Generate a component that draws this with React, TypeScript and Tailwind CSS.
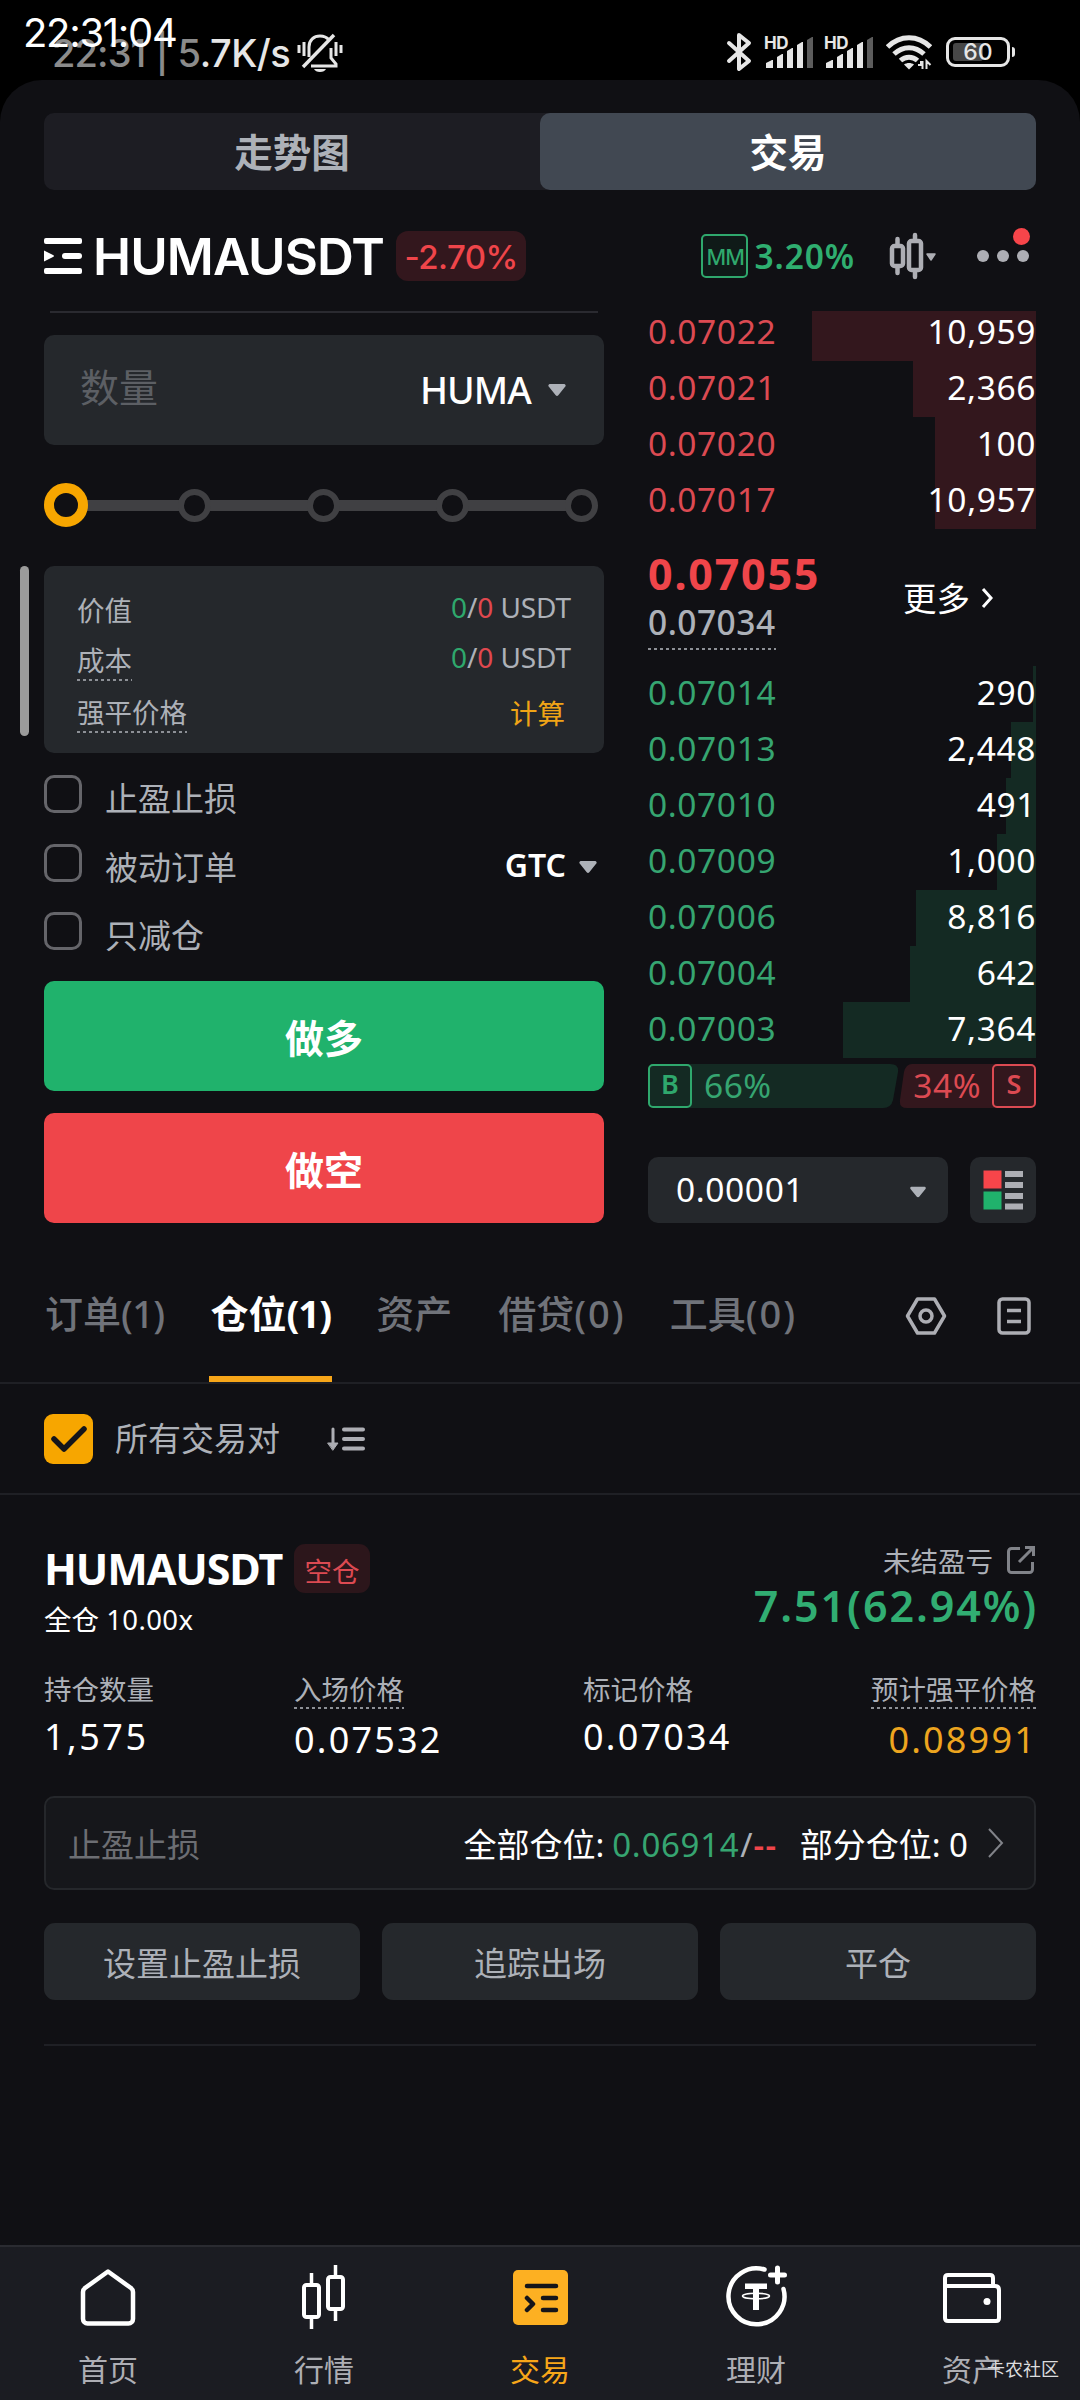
import type { ReactNode } from "react";

const asks = [
  { price: "0.07022", size: "10,959", depth: 224 },
  { price: "0.07021", size: "2,366", depth: 123 },
  { price: "0.07020", size: "100", depth: 101 },
  { price: "0.07017", size: "10,957", depth: 101 },
];

const bids = [
  { price: "0.07014", size: "290", depth: 3 },
  { price: "0.07013", size: "2,448", depth: 25 },
  { price: "0.07010", size: "491", depth: 30 },
  { price: "0.07009", size: "1,000", depth: 39 },
  { price: "0.07006", size: "8,816", depth: 120 },
  { price: "0.07004", size: "642", depth: 126 },
  { price: "0.07003", size: "7,364", depth: 193 },
];

function Caret({ className = "" }: { className?: string }) {
  return (
    <svg viewBox="0 0 18 12" className={`h-3 w-[18px] fill-[#adb1b8] ${className}`}>
      <path d="M2 0h14a1.6 1.6 0 0 1 1.3 2.6l-7 8.6a1.7 1.7 0 0 1-2.6 0l-7-8.6A1.6 1.6 0 0 1 2 0Z" />
    </svg>
  );
}

function Dashed({ children }: { children: ReactNode }) {
  return (
    <span className="flex flex-col">
      {children}
      <span className="h-[2px] bg-[repeating-linear-gradient(90deg,#8d9096_0_3px,transparent_3px_6px)]" />
    </span>
  );
}

function Signal() {
  return (
    <div className="relative h-8 w-[49px]">
      <span className="absolute -top-[3px] left-0 font-['Inter'] text-[17px] leading-[18px] font-bold tracking-[-0.500px]">HD</span>
      <svg viewBox="0 0 49 32" className="h-8 w-[49px] fill-[#e6e6e6]">
        <path d="M2 31v-5l6-3h1v8Z" />
        <path d="M13 31V20l5-3h1v14Z" />
        <path d="M23 31V14l5-3h1v20Z" />
        <path d="M33 31V8l5-3h1v26Z" />
        <path d="M43 31V3l5-3h1v31Z" fill="#5c5c5c" />
      </svg>
    </div>
  );
}

function StatusBar() {
  return (
    <div className="relative flex h-20 items-start justify-between pr-[65px] pl-[52px] text-[#e6e6e6]">
      <div className="flex items-center pt-[30px] font-['Inter'] text-[38px] leading-[46px] font-medium">
        <span className="tracking-[-0.9px] text-[#8b8b8b]">22:31</span>
        <span className="ml-[10px] text-[#8b8b8b]">|</span>
        <span className="ml-[9px] tracking-[-0.5px]">
          <span className="text-[#8b8b8b]">5</span>.7K/s
        </span>
        <svg viewBox="0 0 46 40" className="ml-[7px] h-10 w-[46px]" fill="none" stroke="#e6e6e6" strokeWidth="3">
          <path d="M2 12v8M7 9v14M39 9v14M44 12v8" />
          <path d="M12 24V14C12 7 17 3 23 3c4 0 7 1.500 9 4M34 15v10l5 6v2H14" />
          <path d="M6 34 37 2" strokeWidth="3.500" />
          <path d="M17 36h12c-1 2-3 3-6 3s-5-1-6-3Z" fill="#e6e6e6" stroke="none" />
        </svg>
      </div>
      <span className="absolute top-[9px] left-[23px] font-['Inter'] text-[40px] leading-[48px] tracking-[-1.300px] text-white">
        22:31:04
      </span>
      <div className="flex items-start pt-[32px]">
        <svg viewBox="0 0 26 40" className="h-10 w-[26px]" fill="none" stroke="#e6e6e6" strokeWidth="4" strokeLinejoin="round" strokeLinecap="round">
          <path d="M3 11 23 29 13 37V3l10 8L3 29" />
        </svg>
        <div className="ml-[12px] pt-[5px]"><Signal /></div>
        <div className="ml-[11px] pt-[5px]"><Signal /></div>
        <svg viewBox="0 0 46 36" className="ml-[13px] mt-[3px] h-9 w-[46px]" fill="none" stroke="#e6e6e6" strokeWidth="5">
          <path d="M1.500 12C14-.5 32-.5 44.500 12" />
          <path d="M8 19c9-8.500 21-8.500 30 0" />
          <path d="M14.500 25.500c5-4.500 12-4.500 17 0" />
          <path d="M18 29.500c3-2 7-2 10 0l-5 5Z" fill="#e6e6e6" stroke="none" />
          <path d="M32 30h3v-4M36.500 26v8M40.500 34v-8l4 4" strokeWidth="2" />
        </svg>
        <div className="ml-[14px] mt-[5px] flex items-center">
          <div className="relative flex h-[30px] w-[64px] items-center justify-center rounded-[9px] border-[3px] border-[#e6e6e6]">
            <span className="absolute top-[3px] left-1 h-[18px] w-[30px] rounded-[3px] bg-[#474747]" />
            <span className="relative font-['Inter'] text-[23px] leading-6 font-medium">60</span>
          </div>
          <span className="ml-[2px] h-[10px] w-[3px] rounded-r bg-[#e6e6e6]" />
        </div>
      </div>
    </div>
  );
}

function Header() {
  return (
    <div className="mt-[22px] flex h-[88px] items-center justify-between px-11">
      <div className="flex items-center">
        <svg viewBox="0 0 38 36" className="h-9 w-[38px] fill-white">
          <rect width="38" height="6" rx="2" />
          <rect x="18" y="15" width="20" height="6" rx="3" />
          <rect y="30" width="38" height="6" rx="2" />
          <path d="M0 12.500 9 17q2 1 0 2l-9 4.500Z" />
        </svg>
        <span className="ml-[11px] pt-[2px] font-['Inter'] text-[51px] leading-[60px] font-semibold tracking-[-0.900px] text-white">HUMAUSDT</span>
        <span className="ml-3 flex h-[50px] w-[130px] items-center justify-center rounded-xl bg-[#33171d] pt-[4px] font-['Inter'] text-[33px] font-medium tracking-[-0.500px] text-[#ef454a]">
          -2.70%
        </span>
      </div>
      <div className="flex items-center">
        <span className="flex h-11 w-[47px] items-center justify-center rounded-[5px] border-[2.500px] border-[#2fa86d] bg-[#0f1a18] text-[22px] font-medium tracking-[-1.500px] text-[#2fa86d]">
          MM
        </span>
        <span className="ml-[6px] text-[33.500px] font-semibold tracking-[0.9px] text-[#2fae70]">3.20%</span>
        <svg viewBox="0 0 48 48" className="ml-[34px] h-12 w-12" fill="none" stroke="#adaeb4" strokeWidth="4.500" strokeLinecap="round">
          <rect x="3" y="14" width="11" height="20" rx="2.500" />
          <path d="M8.500 13V7M8.500 35v6" />
          <rect x="20" y="9" width="12" height="29" rx="2.500" />
          <path d="M26 8V3M26 39v6" />
          <path d="M38 22h8l-4 6Z" fill="#adaeb4" strokeWidth="1.500" strokeLinejoin="round" />
        </svg>
        <div className="relative ml-[40px] mr-[7px] flex gap-2">
          <span className="size-3 rounded-full bg-[#adaeb4]" />
          <span className="size-3 rounded-full bg-[#adaeb4]" />
          <span className="size-3 rounded-full bg-[#adaeb4]" />
          <span className="absolute -top-[22px] left-[36px] size-[17px] rounded-full bg-[#f7454a]" />
        </div>
      </div>
    </div>
  );
}

function Slider() {
  return (
    <div className="relative mt-[38px] mr-[6px] flex h-11 items-center justify-between">
      <span className="absolute inset-x-4 top-[17px] h-[11px] bg-[#404043]" />
      <span className="relative size-11 rounded-full border-[10px] border-[#f7a600] bg-[#101014]" />
      <span className="relative -ml-[6px] size-[33px] rounded-full border-[6px] border-[#404043] bg-[#101014]" />
      <span className="relative size-[33px] rounded-full border-[6px] border-[#404043] bg-[#101014]" />
      <span className="relative size-[33px] rounded-full border-[6px] border-[#404043] bg-[#101014]" />
      <span className="relative size-[33px] rounded-full border-[6px] border-[#404043] bg-[#101014]" />
    </div>
  );
}

function CheckRow({ label, children }: { label: string; children?: ReactNode }) {
  return (
    <div className="flex h-[68.5px] items-center">
      <span className="h-[38px] w-[38px] rounded-[10px] border-[3px] border-[#65656a]" />
      <span className="ml-[23px] pt-[10px] text-[33px] leading-[40px] text-[#adb1b8]">{label}</span>
      {children}
    </div>
  );
}

function Usdt() {
  return (
    <span className="text-[28px] leading-[34px] tracking-[-0.1px]">
      <span className="text-[#2fa86d]">0</span>/<span className="text-[#e0484f]">0</span> USDT
    </span>
  );
}

function OrderForm() {
  return (
    <div className="relative flex w-[560px] flex-col">
      <span className="absolute -left-6 top-[255px] h-[170px] w-[9px] rounded-full bg-[#9b9b9b]" />
      <div className="mx-[6px] h-[2px] bg-[#2a2a30]" />
      <div className="mt-[22px] flex h-[110px] items-center rounded-[10px] bg-[#25282c] pr-[38px] pl-[36px]">
        <span className="pb-[7px] text-[39px] leading-[46px] text-[#5c5f64]">数量</span>
        <span className="ml-auto text-[37.500px] leading-[46px] font-medium tracking-[-0.9px] text-white">HUMA</span>
        <Caret className="ml-[17px]" />
      </div>
      <Slider />
      <div className="mt-[39px] flex h-[187px] flex-col rounded-[10px] bg-[#25282c] pt-6 pr-[33px] pl-[33px] text-[27.500px] text-[#adb1b8]">
        <div className="flex h-[50px] items-start justify-between">
          <span className="pt-[3px] leading-9">价值</span>
          <Usdt />
        </div>
        <div className="flex h-[50px] items-start justify-between">
          <span className="pt-[3px]"><Dashed><span className="leading-9">成本</span></Dashed></span>
          <Usdt />
        </div>
        <div className="flex items-start justify-between pr-[6px]">
          <span className="pt-[5px]"><Dashed><span className="leading-9">强平价格</span></Dashed></span>
          <span className="pt-[6px] leading-9 text-[#f0a416]">计算</span>
        </div>
      </div>
      <div className="mt-[7px]">
        <CheckRow label="止盈止损" />
        <CheckRow label="被动订单">
          <span className="ml-auto pt-[5px] text-[32px] font-semibold text-white">GTC</span>
          <Caret className="mt-[9px] mr-[7px] ml-[13px]" />
        </CheckRow>
        <CheckRow label="只减仓" />
      </div>
      <button className="mt-[15.5px] h-[110px] rounded-[10px] bg-[#20b26c] pt-1 text-[39px] font-bold text-white">做多</button>
      <button className="mt-[22px] h-[110px] rounded-[10px] bg-[#ef454a] pt-1 text-[39px] font-bold text-white">做空</button>
    </div>
  );
}

function BookRow({ price, size, depth, ask }: { price: string; size: string; depth: number; ask?: boolean }) {
  return (
    <div className="relative flex h-14 shrink-0 items-center justify-between pb-[3px] text-[33.500px] tracking-[0.6px]">
      <span className={`absolute inset-y-0 right-0 ${ask ? "bg-[#33171d]" : "bg-[#142a23]"}`} style={{ width: depth }} />
      <span className={`relative ${ask ? "text-[#dc4a52]" : "text-[#36a571]"}`}>{price}</span>
      <span className="relative text-white">{size}</span>
    </div>
  );
}

function OrderBook() {
  return (
    <div className="flex w-[388px] flex-col">
      <div className="flex h-[218px] flex-col justify-end overflow-hidden">
        {asks.map((row) => <BookRow key={row.price} ask {...row} />)}
      </div>
      <div className="flex h-[137px] justify-between pt-[19px]">
        <div className="flex flex-col items-start">
          <span className="text-[43px] leading-[52px] font-bold tracking-[1.800px] text-[#ef454a]">0.07055</span>
          <Dashed>
            <span className="pb-[4px] text-[33.500px] leading-[44px] font-medium tracking-[0.5px] text-[#adb1b8]">0.07034</span>
          </Dashed>
        </div>
        <div className="flex h-[100px] items-center pr-[43px] text-[33.500px] text-white">
          更多
          <svg viewBox="0 0 12 20" className="ml-[11px] h-5 w-3" fill="none" stroke="white" strokeWidth="3">
            <path d="m2 1 8 9-8 9" />
          </svg>
        </div>
      </div>
      {bids.map((row) => <BookRow key={row.price} {...row} />)}
      <div className="relative mt-[6px] flex h-11 items-center">
        <svg viewBox="0 0 388 44" className="absolute inset-0 h-11 w-[388px]">
          <path d="M0 6a6 6 0 0 1 6-6H242q9 0 8 8l-5 28q-2 8-10 8H6a6 6 0 0 1-6-6Z" fill="#142a23" />
          <path d="M264 0H382a6 6 0 0 1 6 6V38a6 6 0 0 1-6 6H259q-8 0-7-8l4-28q2-8 8-8Z" fill="#33171d" />
        </svg>
        <span className="relative flex size-11 items-center justify-center rounded-[5px] border-[2.500px] border-[#2fa86d] pb-1 text-[27px] font-semibold text-[#2fa86d]">B</span>
        <span className="relative ml-3 pb-[2px] text-[33.500px] tracking-[0.5px] text-[#36a571]">66%</span>
        <span className="relative ml-auto pb-[2px] text-[33.500px] tracking-[0.5px] text-[#dc4a52]">34%</span>
        <span className="relative ml-[11px] flex size-11 items-center justify-center rounded-[5px] border-[2.500px] border-[#dc4a52] pb-1 text-[27px] font-semibold text-[#dc4a52]">S</span>
      </div>
      <div className="mt-[49px] flex justify-between">
        <div className="flex h-[66px] w-[300px] items-center justify-between rounded-[10px] bg-[#25282c] pr-[21px] pb-[2px] pl-[28px] text-[33.500px] tracking-[0.6px] text-white">
          0.00001
          <Caret className="mt-[6px] scale-90" />
        </div>
        <div className="flex size-[66px] items-center justify-center rounded-[10px] bg-[#25282c]">
          <svg viewBox="0 0 40 40" className="size-10">
            <rect x="0.500" y="0.500" width="18" height="18" fill="#f7454a" />
            <rect x="0.500" y="21.500" width="18" height="18" fill="#20b26c" />
            <path d="M22 1h18v6H22ZM22 12h18v6H22ZM22 23h18v6H22ZM22 33.500h18v6H22Z" fill="#adaeb4" />
          </svg>
        </div>
      </div>
    </div>
  );
}

function PanelTabs() {
  return (
    <div className="mt-[40px] flex h-[121px] items-center border-b-2 border-[#1f2025] pl-[45px] text-[38px] font-medium text-[#70737a]">
      <span className="pb-[19px]">订单<span className="tracking-[-0.700px]">(1)</span></span>
      <span className="relative ml-[46px] flex h-[119px] items-center pb-[19px] font-bold text-white">
        仓位<span className="tracking-[-0.900px]">(1)</span>
        <span className="absolute inset-x-[-1px] bottom-0 h-[6px] bg-[#f7a619]" />
      </span>
      <span className="ml-[45px] pb-[19px]">资产</span>
      <span className="ml-[46px] pb-[19px]">借贷<span className="tracking-[2px]">(0)</span></span>
      <span className="ml-[44px] pb-[19px]">工具<span className="tracking-[2px]">(0)</span></span>
      <svg viewBox="0 0 42 38" className="mb-[13px] ml-auto h-[38px] w-[42px]" fill="none" stroke="#adaeb4" strokeWidth="3.500" strokeLinejoin="round">
        <path d="M12.500 2h17L39.500 19l-10 17h-17L2.500 19Z" />
        <circle cx="21" cy="19" r="6" />
      </svg>
      <svg viewBox="0 0 34 38" className="mr-[49px] mb-[13px] ml-[50px] h-[38px] w-[34px]" fill="none" stroke="#adaeb4" strokeWidth="3.500">
        <rect x="2" y="2" width="30" height="34" rx="3.500" />
        <path d="M10 13.500h14M10 24.500h14" />
      </svg>
    </div>
  );
}

function FilterRow() {
  return (
    <div className="flex h-[111px] items-center border-b-2 border-[#1f2025] pl-11">
      <span className="flex h-[50px] w-[49px] items-center justify-center rounded-[9px] bg-[#f7a600]">
        <svg viewBox="0 0 36 26" className="h-[26px] w-9" fill="none" stroke="#15151a" strokeWidth="5.500" strokeLinecap="round" strokeLinejoin="round">
          <path d="m3 13 10 10L33 3" />
        </svg>
      </span>
      <span className="ml-[22px] text-[33px] text-[#adb1b8]">所有交易对</span>
      <svg viewBox="0 0 38 24" className="ml-[47px] h-6 w-[38px]" fill="none" stroke="#adaeb4" strokeWidth="4" strokeLinecap="round">
        <path d="M6 2v15" strokeWidth="3" />
        <path d="M1 16h10l-5 7Z" fill="#adaeb4" strokeWidth="1" strokeLinejoin="round" />
        <path d="M17 2.500h19M17 12h19M17 21.500h19" />
      </svg>
    </div>
  );
}

function Position() {
  return (
    <div className="mt-[49px] px-11">
      <div className="flex justify-between">
        <div>
          <div className="flex h-[49px] items-center">
            <span className="text-[43px] leading-[49px] font-bold tracking-[-1.100px] text-white">HUMAUSDT</span>
            <span className="ml-3 flex h-[49px] w-[76px] items-center justify-center rounded-[11px] bg-[#2c161b] pt-[7px] text-[27.500px] text-[#dc4a52]">空仓</span>
          </div>
          <div className="mt-[9px] text-[27.500px] leading-9 text-white">全仓 <span className="tracking-[0.400px]">10.00x</span></div>
        </div>
        <div className="flex flex-col items-end">
          <div className="flex h-9 items-center text-[27.500px] text-[#adb1b8]">
            未结盈亏
            <svg viewBox="0 0 30 30" className="mb-[5px] ml-[13px] size-[30px]" fill="none" stroke="#818389" strokeWidth="3">
              <path d="M14 3.500H5.500a3 3 0 0 0-3 3v18a3 3 0 0 0 3 3h18a3 3 0 0 0 3-3V17" />
              <path d="M19 2.500h8.500V11M27 3 13 17" />
            </svg>
          </div>
          <div className="-mr-[2px] text-[43px] leading-[52px] font-semibold tracking-[1.900px] text-[#31ad72]">7.51(62.94%)</div>
        </div>
      </div>
      <div className="mt-[34px] flex h-[90px] text-[27.500px] leading-[35px] text-[#adb1b8]">
        <div className="w-[250px]">
          持仓数量
          <div className="pt-[5px] text-[36px] leading-[50px] tracking-[2.500px] text-white">1,575</div>
        </div>
        <div className="flex w-[289px] flex-col items-start">
          <Dashed>入场价格</Dashed>
          <div className="pt-[6px] text-[36px] leading-[50px] tracking-[2.200px] text-white">0.07532</div>
        </div>
        <div>
          标记价格
          <div className="pt-[5px] text-[36px] leading-[50px] tracking-[2.200px] text-white">0.07034</div>
        </div>
        <div className="ml-auto flex flex-col items-end">
          <Dashed>预计强平价格</Dashed>
          <div className="-mr-[1px] pt-[6px] text-[36px] leading-[50px] tracking-[2.200px] text-[#eda51f]">0.08991</div>
        </div>
      </div>
      <div className="mt-[34px] flex h-[94px] items-center rounded-[10px] border-2 border-[#25272b] bg-[#16171b] px-[22px] pt-1 text-[33px] text-white">
        <span className="text-[#6c6e73]">止盈止损</span>
        <span className="ml-auto">全部仓位:</span>
        <span className="ml-2 tracking-[0.7px] text-[#36a571]">0.06914</span>
        <span className="ml-[1px] text-[#adb1b8]">/</span>
        <span className="ml-[1px] font-semibold tracking-[1.500px] text-[#ef454a]">--</span>
        <span className="ml-[22px]">部分仓位: 0</span>
        <svg viewBox="0 0 16 30" className="mr-[8px] mb-1 ml-[20px] h-[30px] w-4" fill="none" stroke="#818389" strokeWidth="2">
          <path d="m1 1 13 14L1 29" />
        </svg>
      </div>
      <div className="mt-[33px] grid grid-cols-3 gap-[22px] text-[33px] text-[#adb1b8]">
        <button className="h-[77px] rounded-[11px] bg-[#25282c] pt-1">设置止盈止损</button>
        <button className="h-[77px] rounded-[11px] bg-[#25282c] pt-1">追踪出场</button>
        <button className="h-[77px] rounded-[11px] bg-[#25282c] pt-1">平仓</button>
      </div>
      <div className="mt-11 h-[2px] bg-[#1f2025]" />
    </div>
  );
}

function NavItem({ label, active, children }: { label: string; active?: boolean; children: ReactNode }) {
  return (
    <div className="flex flex-1 flex-col items-center pt-[16px]">
      <svg viewBox="0 0 68 68" className="size-[68px]" fill="none" stroke="white" strokeWidth="4.500" strokeLinejoin="round">
        {children}
      </svg>
      <span className={`mt-[17px] text-[30px] leading-[44px] ${active ? "text-[#f7a619]" : "text-[#adaeb4]"}`}>{label}</span>
    </div>
  );
}

function BottomNav() {
  return (
    <div className="relative mt-auto flex h-[155px] border-t-2 border-[#2a2b31] bg-[#1b1c22]">
      <NavItem label="首页">
        <path d="M34 8.500 57 25q2 1.500 2 4v27a4.500 4.500 0 0 1-4.500 4.500h-41A4.500 4.500 0 0 1 9 56V29q0-2.500 2-4Z" />
      </NavItem>
      <NavItem label="行情">
        <g strokeWidth="4">
          <rect x="14" y="22" width="15" height="32" rx="2.500" />
          <path d="M21.500 22V10M21.500 54v12" strokeWidth="3.500" />
          <rect x="38" y="14" width="15" height="32" rx="2.500" />
          <path d="M45.500 14V2M45.500 46v12" strokeWidth="3.500" />
        </g>
      </NavItem>
      <NavItem label="交易" active>
        <rect x="7" y="7" width="55" height="55" rx="5" fill="#fdb022" stroke="none" />
        <path d="M21 23h29M37 35h13M37 47h13M21 35l6 6-6 6" stroke="#15151a" strokeLinecap="round" />
      </NavItem>
      <NavItem label="理财">
        <path d="M42.500 7.500A28 28 0 1 0 61.500 27" strokeLinecap="round" transform="translate(0 -1)" />
        <path d="M55.500 5v14M48.500 12h14" strokeLinecap="round" strokeWidth="5" />
        <path d="M23 20.500h22v5.500h-8v21h-6V26h-8Z" fill="white" stroke="none" />
        <ellipse cx="34" cy="33" rx="13.500" ry="2.800" strokeWidth="1.500" />
      </NavItem>
      <NavItem label="资产">
        <path d="M7 23V15q0-3 3-3h42q3 0 3 3v8" strokeWidth="4" />
        <path d="M7 23h50q4 0 4 4v28q0 3-3 3H10q-3 0-3-3Z" strokeWidth="4" />
        <circle cx="49" cy="38.500" r="3.500" fill="white" stroke="none" />
      </NavItem>
      <span className="absolute top-[110px] right-[21px] text-[18px] leading-6 text-[#dcdcde]">卡农社区</span>
    </div>
  );
}

export default function App() {
  return (
    <div lang="zh-CN" className="flex h-[2400px] w-[1080px] flex-col overflow-hidden bg-black font-['Noto_Sans','Noto_Sans_CJK_SC',sans-serif]">
      <StatusBar />
      <div className="flex flex-1 flex-col rounded-t-[42px] bg-[#101014]">
        <div className="mx-11 mt-[33px] flex h-[77px] rounded-[10px] bg-[#1d1d23] text-[38.500px] font-bold">
          <button className="flex-1 pt-[3px] text-[#adb1b8]">走势图</button>
          <button className="flex-1 rounded-[10px] bg-[#414852] pt-[3px] text-white">交易</button>
        </div>
        <Header />
        <div className="mt-[11px] flex justify-between px-11">
          <OrderForm />
          <OrderBook />
        </div>
        <PanelTabs />
        <FilterRow />
        <Position />
        <BottomNav />
      </div>
    </div>
  );
}
